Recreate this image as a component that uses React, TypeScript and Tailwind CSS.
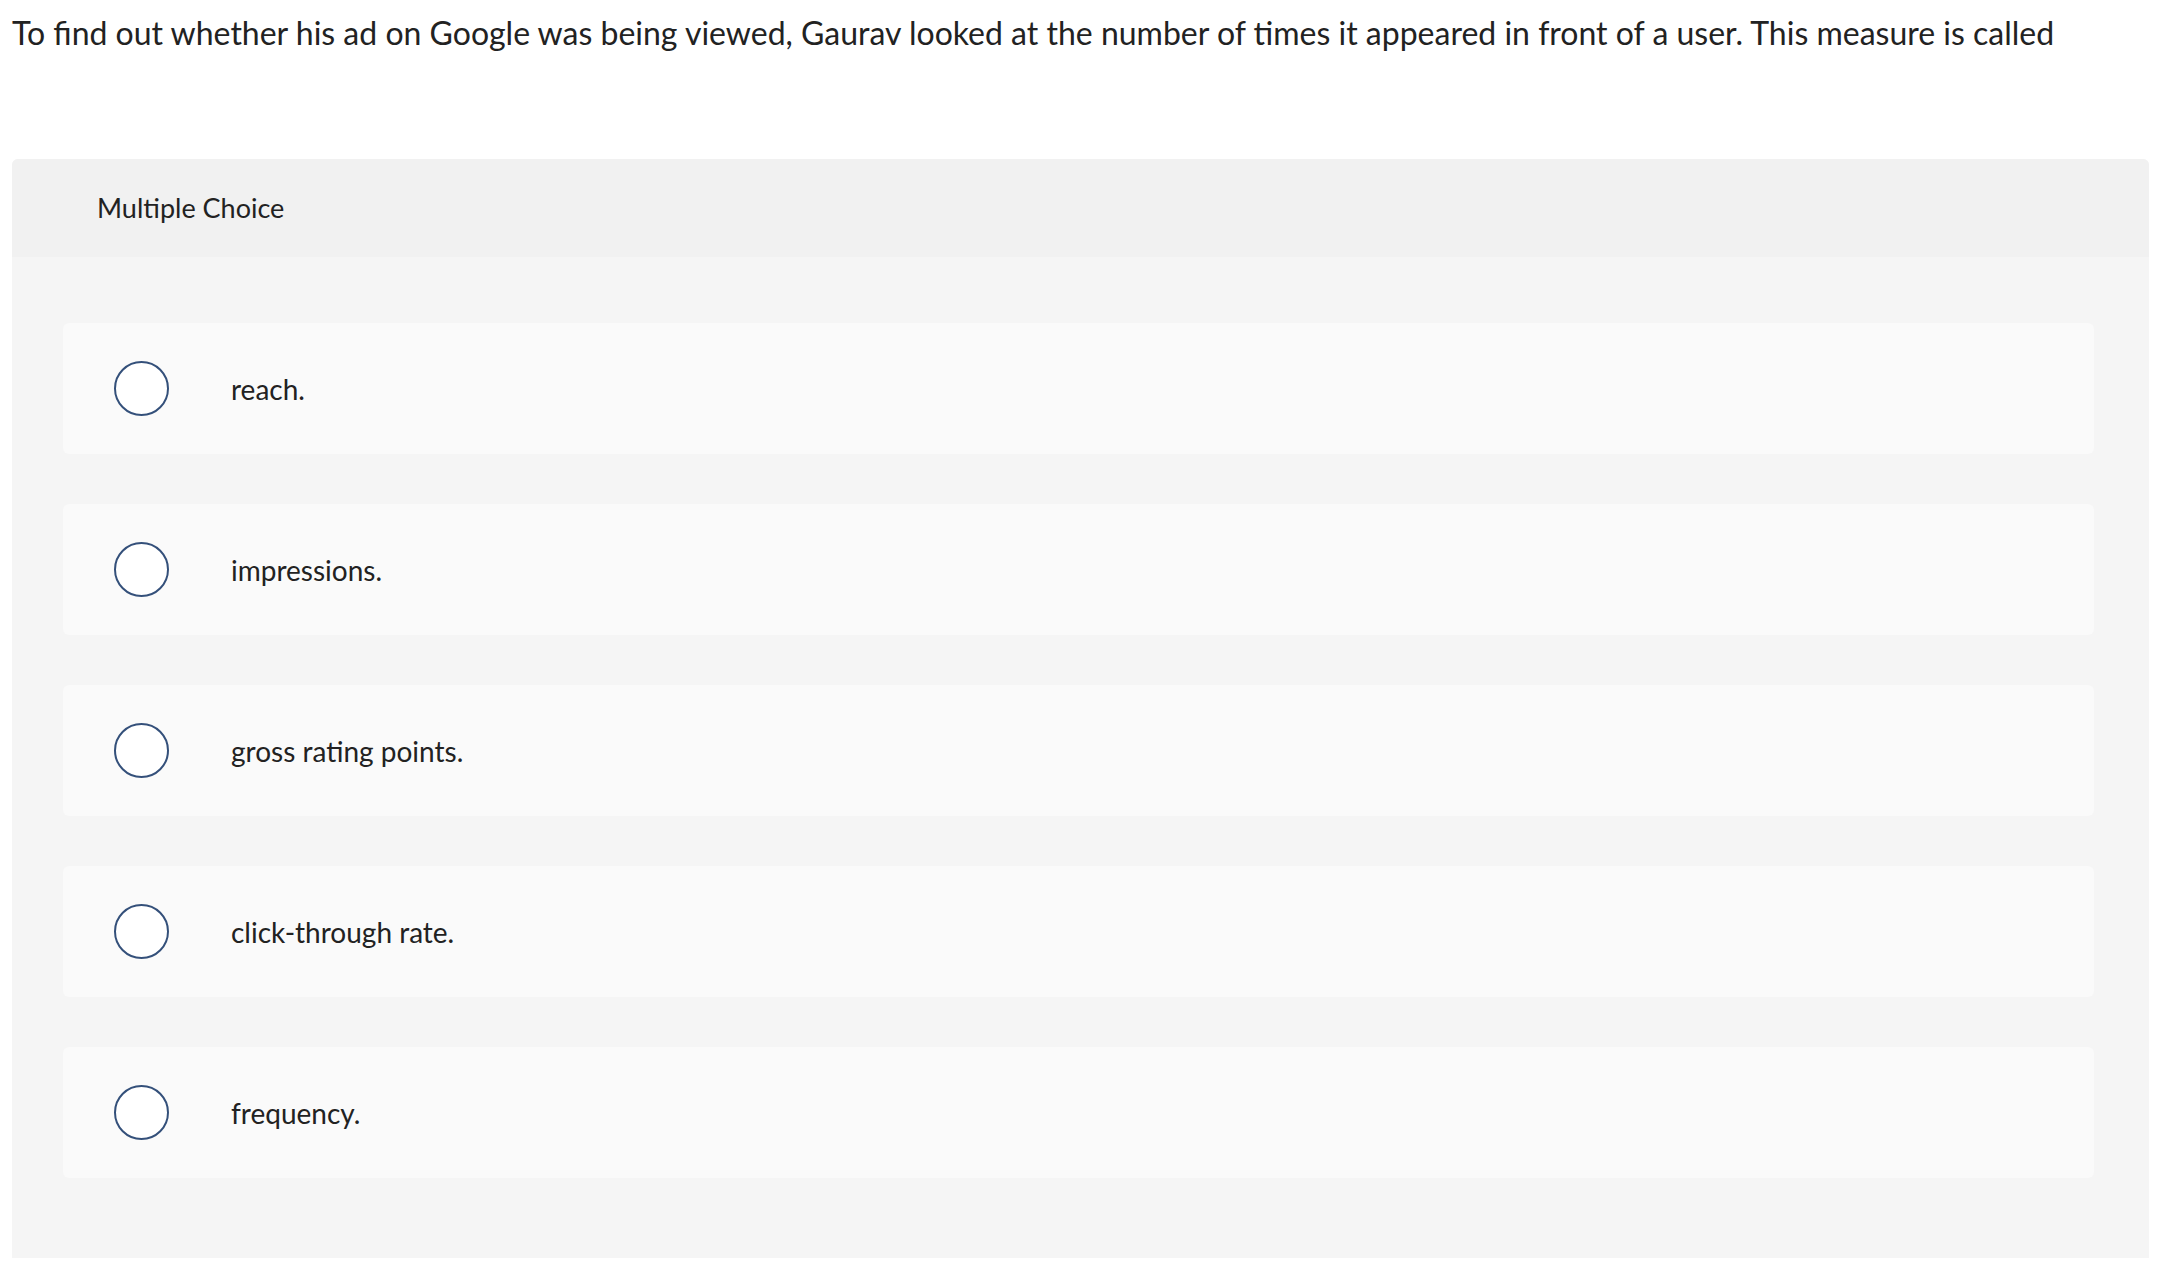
const options = ['reach.', 'impressions.', 'gross rating points.', 'click-through rate.', 'frequency.']

export default function App() {
  return (
    <div className="min-h-screen bg-white text-[#222222]" style={{ fontFamily: 'Lato, "Liberation Sans", sans-serif' }}>
      <div className="pl-[12px] pr-[14px]">
        <p className="h-[66px] pt-[14px] text-[32px] leading-[38px] whitespace-nowrap">
          To find out whether his ad on Google was being viewed, Gaurav looked at the number of times it appeared in front of a user. This measure is called
        </p>
        <div className="mt-[93px] rounded-t-[6px] bg-[#f5f5f5]">
          <div className="flex h-[98px] items-center rounded-t-[6px] bg-[#f1f1f1] pl-[85px] text-[27px]">
            Multiple Choice
          </div>
          <div className="flex flex-col gap-[50px] pt-[66px] pb-[80px] pl-[51px] pr-[55px]">
            {options.map((o) => (
              <div key={o} className="flex h-[131px] items-center rounded-[6px] bg-[#fafafa] pl-[51px]">
                <span className="h-[55px] w-[55px] shrink-0 rounded-full border-2 border-[#34507a] bg-white" />
                <span className="ml-[62px] text-[28px]">{o}</span>
              </div>
            ))}
          </div>
        </div>
      </div>
    </div>
  )
}
